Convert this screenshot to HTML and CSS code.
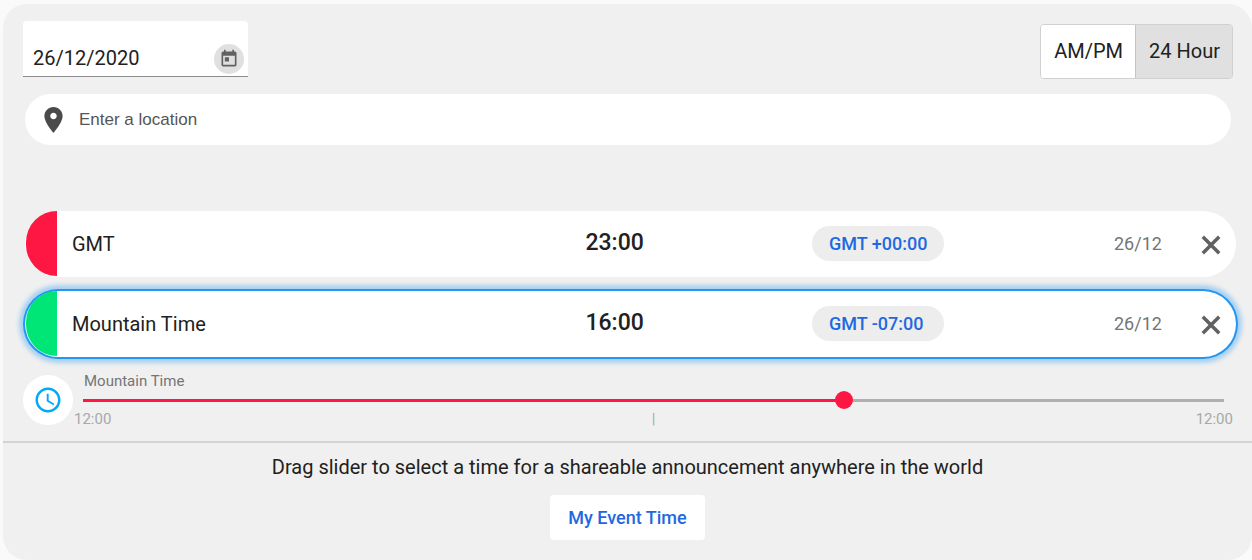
FILE: index.html
```
<!DOCTYPE html>
<html lang="en">
<head>
    <meta charset="UTF-8" />
    <meta name="viewport" content="width=device-width, initial-scale=1.0" />
    <title>Event Time Announcer</title>
    <link rel="stylesheet" href="styles.css">
</head>
<body>

<main class="panel">
    <!-- Date and hour format -->
    <div class="toolbar">
        <div class="date-field">
            <input type="text" id="date" aria-label="Date" value="26/12/2020">
            <button type="button" class="date-button" aria-label="Open calendar">
                <svg viewBox="0 0 24 24" width="20" height="20" fill="#616161">
                    <path d="M19 3h-1V1h-2v2H8V1H6v2H5c-1.11 0-1.99.9-1.99 2L3 19c0 1.1.89 2 2 2h14c1.1 0 2-.9 2-2V5c0-1.1-.9-2-2-2zm0 16H5V8h14v11zM7 10h5v5H7z"/>
                </svg>
            </button>
        </div>
        <div class="format-toggle">
            <button type="button" aria-pressed="false">AM/PM</button>
            <button type="button" class="active" aria-pressed="true">24 Hour</button>
        </div>
    </div>

    <!-- Location search -->
    <div class="location">
        <svg viewBox="5 2 14 20" width="19" height="26" fill="#4a4a4a">
            <path d="M12 2C8.13 2 5 5.13 5 9c0 5.25 7 13 7 13s7-7.75 7-13c0-3.87-3.13-7-7-7zm0 9.5c-1.38 0-2.5-1.12-2.5-2.5s1.12-2.5 2.5-2.5 2.5 1.12 2.5 2.5-1.12 2.5-2.5 2.5z"/>
        </svg>
        <input type="text" id="location" aria-label="Location" placeholder="Enter a location">
    </div>

    <!-- Time zones -->
    <div class="zones">
        <div class="zone">
            <span class="zone-color red"></span>
            <span class="zone-name">GMT</span>
            <span class="zone-time">23:00</span>
            <span class="zone-offset">GMT +00:00</span>
            <span class="zone-date">26/12</span>
            <button type="button" class="zone-remove" aria-label="Remove GMT">
                <svg viewBox="0 0 20 20" width="20" height="20" stroke="#616161" stroke-width="3.5">
                    <path d="M1.8 1.8L18.2 18.2M18.2 1.8L1.8 18.2"/>
                </svg>
            </button>
        </div>
        <div class="zone selected">
            <span class="zone-color green"></span>
            <span class="zone-name">Mountain Time</span>
            <span class="zone-time">16:00</span>
            <span class="zone-offset">GMT -07:00</span>
            <span class="zone-date">26/12</span>
            <button type="button" class="zone-remove" aria-label="Remove Mountain Time">
                <svg viewBox="0 0 20 20" width="20" height="20" stroke="#616161" stroke-width="3.5">
                    <path d="M1.8 1.8L18.2 18.2M18.2 1.8L1.8 18.2"/>
                </svg>
            </button>
        </div>
    </div>

    <!-- Time slider -->
    <div class="slider">
        <span class="slider-icon">
            <svg viewBox="0 0 24 24" width="30" height="30" fill="#03a9f4">
                <path d="M11.99 2C6.47 2 2 6.48 2 12s4.47 10 9.99 10C17.52 22 22 17.52 22 12S17.52 2 11.99 2zM12 20c-4.42 0-8-3.58-8-8s3.58-8 8-8 8 3.58 8 8-3.58 8-8 8z"/>
                <path d="M12.5 7H11v6l5.25 3.15.75-1.23-4.5-2.67z"/>
            </svg>
        </span>
        <div class="slider-body">
            <label for="time">Mountain Time</label>
            <input type="range" id="time" min="0" max="1440" value="960" style="--position: 66.67%">
            <div class="slider-scale">
                <span>12:00</span>
                <span>|</span>
                <span>12:00</span>
            </div>
        </div>
    </div>

    <!-- Shareable announcement -->
    <div class="announce">
        <p>Drag slider to select a time for a shareable announcement anywhere in the world</p>
        <button type="button">My Event Time</button>
    </div>
</main>

<script>
    const time = document.getElementById('time');

    time.addEventListener('input', () => {
        time.style.setProperty('--position', (time.value / time.max * 100) + '%');
    });
</script>

</body>
</html>
```

FILE: styles.css
```
/* Basic Styles */
* {
    box-sizing: border-box;
}

body {
    font-family: Roboto, sans-serif;
    font-size: 20px;
    color: #212121;
    background-color: #fafafa;
    margin: 4px 0 0 3px;
}

button, input {
    font-family: inherit;
    font-size: inherit;
    color: inherit;
    border: none;
    outline: none;
    margin: 0;
    padding: 0;
}

button {
    cursor: pointer;
}

svg {
    display: block;
}

.panel {
    background-color: #f0f0f0;
    border-radius: 24px;
    padding: 17px 0 20px;
}

/* Date and hour format */
.toolbar {
    display: flex;
    justify-content: space-between;
    align-items: flex-start;
    padding: 0 19px 0 20px;
}

.date-field {
    display: flex;
    align-items: flex-end;
    width: 225px;
    height: 56px;
    padding: 0 4px 2px 10px;
    background-color: #fff;
    border-bottom: 1px solid #8c8c8c;
    border-radius: 4px 4px 0 0;
}

.date-field input {
    flex: 1;
    min-width: 0;
    height: 32px;
    background: none;
}

.date-button {
    display: flex;
    align-items: center;
    justify-content: center;
    width: 30px;
    height: 30px;
    background-color: #e0e0e0;
    border-radius: 50%;
}

.format-toggle {
    display: flex;
    height: 55px;
    margin-top: 3px;
    border: 1px solid #d0d0d0;
    border-radius: 4px;
    overflow: hidden;
}

.format-toggle button {
    padding: 0 12px 2px 13px;
    background-color: #fff;
}

.format-toggle .active {
    background-color: #e0e0e0;
    border-left: 1px solid #c4c4c4;
}

/* Location search */
.location {
    display: flex;
    align-items: center;
    gap: 16px;
    height: 51px;
    margin: 15px 21px 0 22px;
    padding: 0 19px;
    background-color: #fff;
    border-radius: 26px;
}

.location input {
    flex: 1;
    height: 40px;
    font-family: "Liberation Sans", Arial, sans-serif;
    font-size: 17px;
    background: none;
}

.location input::placeholder {
    color: #555;
    opacity: 1;
}

/* Time zones */
.zones {
    display: flex;
    flex-direction: column;
    gap: 14px;
    margin: 66px 16px 0 22px;
}

.zone {
    display: grid;
    grid-template-columns: 46px 34fr 15fr 20fr 82px 40px;
    align-items: center;
    height: 66px;
    padding: 0 0 1px 1px;
    background-color: #fff;
    border-radius: 33px;
}

.zone.selected {
    box-shadow: 0 0 0 2px #2196f3, 0 0 4px 6px rgba(33, 150, 243, 0.35);
}

.zone-color {
    width: 31px;
    height: 65px;
    border-radius: 33px 0 0 33px;
}

.zone-color.red {
    background-color: #ff1744;
}

.zone-color.green {
    background-color: #00e676;
}

.zone-time {
    font-size: 23px;
    font-weight: 500;
    padding-bottom: 2px;
}

.zone-offset {
    justify-self: start;
    min-width: 132px;
    padding: 0 17px;
    font-size: 18px;
    font-weight: 500;
    line-height: 35px;
    color: #1f69e0;
    background-color: #ededed;
    border-radius: 18px;
}

.zone-date {
    font-size: 18px;
    color: #757575;
}

.zone-remove {
    justify-self: start;
    padding: 7px 5px 4px;
    background: none;
}

/* Time slider */
.slider {
    display: flex;
    align-items: center;
    margin-top: 14px;
    padding: 0 19px 0 20px;
}

.slider-icon {
    display: flex;
    align-items: center;
    justify-content: center;
    flex: none;
    width: 50px;
    height: 50px;
    background-color: #fff;
    border-radius: 50%;
}

.slider-body {
    flex: 1;
    min-width: 0;
    padding-left: 1px;
}

.slider label {
    display: block;
    padding-left: 10px;
    font-size: 15px;
    line-height: 20px;
    color: #757575;
}

.slider input {
    display: block;
    width: 100%;
    height: 18px;
    appearance: none;
    background: linear-gradient(to right, #ff1744 var(--position), #b0b0b0 var(--position)) center / calc(100% - 18px) 3px no-repeat;
}

.slider input::-webkit-slider-thumb {
    appearance: none;
    width: 18px;
    height: 18px;
    background-color: #ff1744;
    border-radius: 50%;
}

.slider input::-moz-range-thumb {
    width: 18px;
    height: 18px;
    background-color: #ff1744;
    border: none;
    border-radius: 50%;
}

.slider-scale {
    display: flex;
    justify-content: space-between;
    font-size: 15px;
    line-height: 20px;
    color: #a8a8a8;
}

/* Shareable announcement */
.announce {
    display: flex;
    flex-direction: column;
    align-items: center;
    gap: 16px;
    margin-top: 12px;
    padding-top: 12px;
    border-top: 2px solid #d3d3d3;
}

.announce p {
    margin: 0;
    line-height: 24px;
}

.announce button {
    height: 45px;
    padding: 0 18px;
    font-size: 18px;
    font-weight: 500;
    color: #1f69e0;
    background-color: #fff;
    border-radius: 4px;
}
```
